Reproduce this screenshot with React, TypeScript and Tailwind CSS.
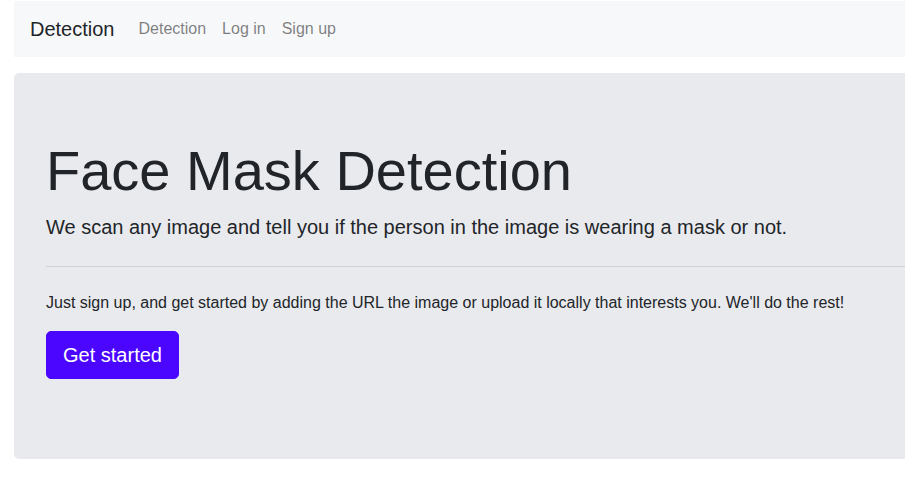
import React from 'react';

const App = () => {
  return (
    <div className="w-[905px] h-[489px] overflow-hidden bg-white text-[#212529] font-['Liberation_Sans',Arial,sans-serif]">
      <div className="w-[1100px] ml-[14px] pt-px">
        {/* Navbar */}
        <nav className="flex items-center h-14 px-4 bg-[#f7f8fa]">
          <a className="text-xl leading-[30px] py-[5px] mr-4 text-[#212529]">Detection</a>
          <ul className="flex">
            <li><a className="block px-2 py-2 text-base leading-6 text-black/50">Detection</a></li>
            <li><a className="block px-2 py-2 text-base leading-6 text-black/50">Log in</a></li>
            <li><a className="block px-2 py-2 text-base leading-6 text-black/50">Sign up</a></li>
          </ul>
        </nav>

        {/* Jumbotron */}
        <section className="mt-4 bg-[#e9eaee] rounded-[5px] px-8 py-16">
          <h1 className="text-[56px] leading-[1.2] mb-2">Face Mask Detection</h1>
          <p className="text-xl leading-[30px]">
            We scan any image and tell you if the person in the image is wearing a mask or not.
          </p>
          <hr className="my-6 border-0 border-t border-black/10" />
          <p className="text-base leading-6 mb-4">
            Just sign up, and get started by adding the URL the image or upload it locally that interests you. We'll do the rest!
          </p>
          <p className="mb-4">
            <a className="inline-block bg-[#4a06ff] text-white text-xl leading-[30px] px-4 py-2 border border-[#4a06ff] rounded-[5px]">
              Get started
            </a>
          </p>
        </section>
      </div>
    </div>
  );
};

export default App;
